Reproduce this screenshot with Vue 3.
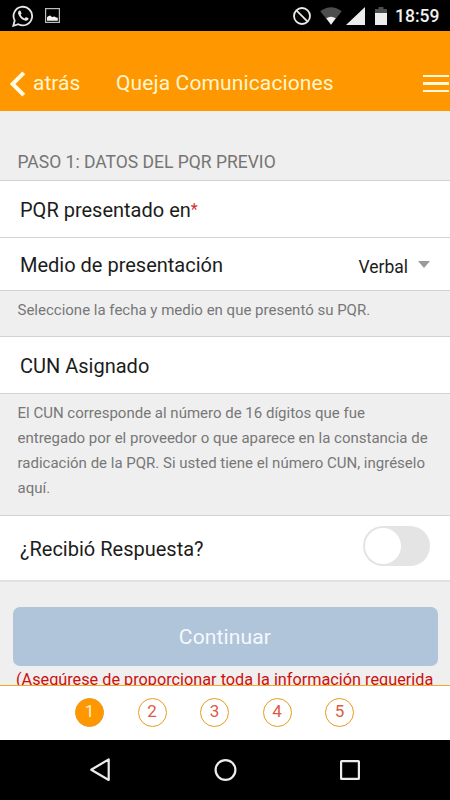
<script setup>
import { ref } from 'vue';

const steps = [1, 2, 3, 4, 5];
const currentStep = ref(1);
const medio = ref('Verbal');
const recibioRespuesta = ref(false);

const goToStep = (step) => {
  currentStep.value = step;
};
</script>

<template>
  <div class="screen">
    <div class="status-bar">
      <svg class="ico-whatsapp" width="22" height="22" viewBox="0 0 22 22">
        <path d="M1.3 20.8 L2.7 15.6 A9.3 9.3 0 1 1 6.3 19.2 Z" fill="none" stroke="#e6e6e6" stroke-width="1.8" />
        <path d="M7.4 5.5 C6 6.2 5.6 8 6.6 10 C8.2 13.3 10.8 15.2 13.6 15.8 C15.3 16 16.5 14.9 16.6 13.3 L13.9 11.9 L12.6 13.4 C10.8 12.7 9.5 11.4 8.7 9.8 L9.6 8.5 L8.5 5.7 Z" fill="#e6e6e6" />
      </svg>
      <svg class="ico-image" width="15" height="15" viewBox="0 0 15 15">
        <rect x="0.6" y="0.6" width="13.8" height="13.8" fill="none" stroke="#bdbdbd" stroke-width="1.2" />
        <path d="M2 12.8 V9.3 L3.6 8 L5.2 7.6 L7 8.9 L9.5 8.4 L11.2 9.4 L12.8 9.7 V12.8 Z" fill="#f2f2f2" />
      </svg>
      <div class="status-right">
        <svg width="18" height="18" viewBox="0 0 18 18">
          <circle cx="9" cy="9" r="8" fill="none" stroke="#ebebeb" stroke-width="1.8" />
          <path d="M3.4 3.4 L14.6 14.6" stroke="#ebebeb" stroke-width="1.8" />
        </svg>
        <svg class="ico-wifi" width="22" height="18" viewBox="0 0 22 18">
          <path d="M0.3 4.2 Q11 -3.6 21.7 4.2 L11 17.7 Z" fill="#4d4d4d" />
          <path d="M6.3 11.3 Q11 8.2 15.7 11.3 L11 17.7 Z" fill="#f2f2f2" />
        </svg>
        <svg class="ico-signal" width="19" height="18" viewBox="0 0 19 18">
          <path d="M0 18 L19 0 V18 Z" fill="#ededed" />
        </svg>
        <svg class="ico-battery" width="12" height="18" viewBox="0 0 12 18">
          <path d="M0 2 H3.5 V0 H8.5 V2 H12 V6 H0 Z" fill="#4d4d4d" />
          <rect y="6" width="12" height="12" fill="#ededed" />
        </svg>
        <span class="clock">18:59</span>
      </div>
    </div>

    <header class="header">
      <button class="back">
        <svg width="16" height="26" viewBox="0 0 16 26">
          <path d="M13.8 1.8 L2.6 13 L13.8 24.2" fill="none" stroke="#fffbe6" stroke-width="4" />
        </svg>
        <span>atrás</span>
      </button>
      <h1 class="title">Queja Comunicaciones</h1>
      <div class="menu">
        <i></i>
        <i></i>
        <i></i>
      </div>
    </header>

    <main class="content">
      <h2 class="section-title">PASO 1: DATOS DEL PQR PREVIO</h2>

      <div class="row row-date">
        <span class="label">PQR presentado en</span><span class="required">*</span>
      </div>
      <div class="row row-medio">
        <span class="label">Medio de presentación</span>
        <div class="select">
          <span>{{ medio }}</span>
          <i class="caret"></i>
        </div>
      </div>
      <p class="hint hint-medio">Seleccione la fecha y medio en que presentó su PQR.</p>

      <div class="row row-cun">
        <span class="label">CUN Asignado</span>
      </div>
      <p class="hint hint-cun">
        El CUN corresponde al número de 16 dígitos que fue<br />
        entregado por el proveedor o que aparece en la constancia de<br />
        radicación de la PQR. Si usted tiene el número CUN, ingréselo<br />
        aquí.
      </p>

      <div class="row row-respuesta">
        <span class="label">¿Recibió Respuesta?</span>
        <div
          class="toggle"
          :class="{ 'is-on': recibioRespuesta }"
          @click="recibioRespuesta = !recibioRespuesta"
        >
          <div class="knob"></div>
        </div>
      </div>

      <button class="continue">Continuar</button>
      <p class="warning">(Asegúrese de proporcionar toda la información requerida</p>
    </main>

    <footer class="steps">
      <div
        v-for="step in steps"
        :key="step"
        class="step"
        :class="{ 'is-active': step === currentStep }"
        @click="goToStep(step)"
      >
        {{ step }}
      </div>
    </footer>

    <nav class="nav-bar">
      <svg width="22" height="26" viewBox="0 0 22 26">
        <path d="M19.7 2.4 V23 L2.2 12.7 Z" fill="none" stroke="#ececec" stroke-width="2.2" stroke-linejoin="round" />
      </svg>
      <svg width="24" height="24" viewBox="0 0 24 24">
        <circle cx="11.5" cy="12" r="9.9" fill="none" stroke="#ececec" stroke-width="2.2" />
      </svg>
      <svg width="20" height="20" viewBox="0 0 20 20">
        <rect x="1.1" y="1.1" width="17.8" height="17.8" rx="0.5" fill="none" stroke="#ececec" stroke-width="2.2" />
      </svg>
    </nav>
  </div>
</template>

<style>
body {
  margin: 0;
}
</style>

<style scoped>
.screen {
  display: flex;
  flex-direction: column;
  width: 450px;
  height: 800px;
  overflow: hidden;
  background-color: #efefef;
  font-family: Roboto, sans-serif;
}

.screen * {
  box-sizing: border-box;
}

svg {
  display: block;
  flex-shrink: 0;
}

button {
  border: none;
  padding: 0;
  font-family: inherit;
  cursor: pointer;
}

.status-bar {
  display: flex;
  align-items: center;
  height: 31px;
  flex-shrink: 0;
  padding: 0 10px 0 12px;
  background-color: #000;
}

.ico-image {
  margin-left: 11px;
}

.status-right {
  display: flex;
  align-items: center;
  margin-left: auto;
}

.ico-wifi {
  margin-left: 9px;
}

.ico-signal {
  margin-left: 4px;
}

.ico-battery {
  margin-left: 10px;
}

.clock {
  width: 45px;
  margin-left: 8px;
  padding-top: 2px;
  font-size: 17.5px;
  font-weight: 500;
  line-height: 29px;
  color: #f0f0f0;
}

.header {
  display: flex;
  align-items: center;
  height: 80px;
  flex-shrink: 0;
  padding: 25px 0 0 10px;
  background-color: #ff9800;
  color: #fff6cf;
}

.back {
  display: flex;
  align-items: center;
  width: 106px;
  background: none;
  color: inherit;
  font-size: 21px;
}

.back span {
  margin: -2px 0 0 7px;
}

.title {
  margin: -2px 0 0;
  font-size: 21px;
  font-weight: 400;
  letter-spacing: 0.13px;
}

.menu {
  display: flex;
  flex-direction: column;
  gap: 5px;
  width: 26px;
  margin: 0 1px 0 auto;
}

.menu i {
  height: 2.5px;
  background-color: #fff8dc;
}

.content {
  flex: 1;
  min-height: 0;
  overflow: hidden;
}

.section-title {
  height: 70px;
  margin: 0;
  padding: 40px 0 0 17.5px;
  border-bottom: 1px solid #d2d2d2;
  font-size: 17.5px;
  line-height: 22px;
  font-weight: 400;
  color: #757575;
}

.row {
  display: flex;
  align-items: center;
  padding: 0 20px;
  border-bottom: 1px solid #d2d2d2;
  background-color: #fff;
}

.row-date {
  height: 57px;
}

.row-medio {
  height: 53px;
}

.row-cun {
  height: 57px;
}

.row-respuesta {
  height: 66px;
  border-bottom: 2px solid #e2e2e2;
}

.label {
  padding-top: 1px;
  font-size: 20px;
  color: #1c1c1c;
}

.required {
  font-size: 16px;
  color: #d32f2f;
}

.select {
  display: flex;
  align-items: center;
  margin-left: auto;
  padding-top: 6px;
  font-size: 17.5px;
  color: #1c1c1c;
}

.caret {
  margin: -6px 0 0 10px;
  border-top: 7px solid #9a9a9a;
  border-left: 6px solid transparent;
  border-right: 6px solid transparent;
}

.hint {
  margin: 0;
  padding-left: 17.5px;
  border-bottom: 1px solid #d2d2d2;
  font-size: 15px;
  line-height: 25px;
  white-space: nowrap;
  color: #777;
}

.hint-medio {
  height: 46px;
  padding-top: 7px;
}

.hint-cun {
  height: 122px;
  padding-top: 7px;
}

.toggle {
  width: 67px;
  height: 40px;
  margin: -5px 0 0 auto;
  padding: 2px;
  border-radius: 20px;
  background-color: #e4e4e4;
  cursor: pointer;
}

.toggle.is-on {
  background-color: #ff9800;
}

.toggle.is-on .knob {
  margin-left: 27px;
}

.knob {
  width: 36px;
  height: 36px;
  border-radius: 50%;
  background-color: #fff;
}

.continue {
  display: block;
  width: 425px;
  height: 59px;
  margin: 25px auto 0;
  border-radius: 7px;
  background-color: #b0c4da;
  color: #f5f9fd;
  font-size: 21px;
  letter-spacing: 0.15px;
}

.warning {
  margin: 2px 0 0 16px;
  font-size: 16.25px;
  line-height: 23px;
  white-space: nowrap;
  color: #cc1010;
}

.steps {
  display: flex;
  gap: 33.5px;
  height: 55px;
  flex-shrink: 0;
  padding: 12px 0 0 75px;
  border-top: 1px solid #f5a623;
  background-color: #fff;
}

.step {
  width: 29px;
  height: 29px;
  border: 1px solid #e99a1c;
  border-radius: 50%;
  font-size: 17px;
  line-height: 25px;
  text-align: center;
  color: #dd5a45;
  cursor: pointer;
}

.step.is-active {
  background-color: #ff9800;
  color: #fff3d6;
}

.nav-bar {
  display: flex;
  align-items: center;
  justify-content: space-between;
  height: 60px;
  flex-shrink: 0;
  padding: 0 90px 0 89px;
  background-color: #000;
}
</style>
